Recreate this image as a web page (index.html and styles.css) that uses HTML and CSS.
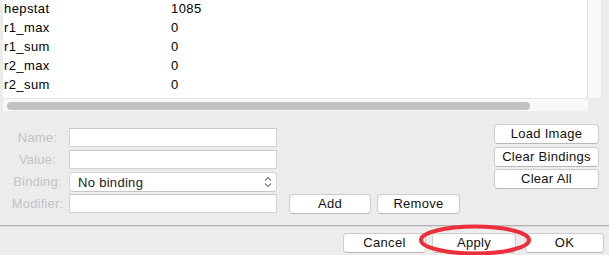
FILE: index.html
```html
<!DOCTYPE html>
<html>
<head>
<meta charset="utf-8">
<link rel="stylesheet" href="styles.css">
</head>
<body>
<div class="window">
  <div class="scrollview">
    <div class="table">
      <div class="row"><span class="c1">hepstat</span><span class="c2">1085</span></div>
      <div class="row"><span class="c1">r1_max</span><span class="c2">0</span></div>
      <div class="row"><span class="c1">r1_sum</span><span class="c2">0</span></div>
      <div class="row"><span class="c1">r2_max</span><span class="c2">0</span></div>
      <div class="row"><span class="c1">r2_sum</span><span class="c2">0</span></div>
    </div>
    <div class="vtrack"></div>
    <div class="htrack"><div class="thumb"></div></div>
  </div>

  <div class="form">
    <div class="fields">
      <label class="lbl">Name:</label><div class="input"></div><div></div>
      <label class="lbl">Value:</label><div class="input"></div><div></div>
      <label class="lbl">Binding:</label>
      <div class="popup"><span>No binding</span>
        <svg class="chev" width="8" height="12" viewBox="0 0 8 12"><path d="M1 4.5 L4 1.5 L7 4.5 M1 7.5 L4 10.5 L7 7.5" fill="none" stroke="#7a7a7a" stroke-width="1.1"/></svg>
      </div><div></div>
      <label class="lbl">Modifier:</label><div class="input"></div>
      <div class="pair"><button class="btn w-add">Add</button><button class="btn w-remove">Remove</button></div>
    </div>
    <div class="side">
      <button class="btn w-side">Load Image</button>
      <button class="btn w-side">Clear Bindings</button>
      <button class="btn w-side">Clear All</button>
    </div>
  </div>

  <div class="footer">
    <button class="btn w-cancel">Cancel</button>
    <button class="btn w-apply">Apply</button>
    <button class="btn w-ok">OK</button>
  </div>

  <svg class="mark" width="120" height="36" viewBox="0 0 120 36"><ellipse cx="59" cy="16" rx="54" ry="13.5" fill="none" stroke="#ec2f3a" stroke-width="4"/></svg>
</div>
</body>
</html>
```

FILE: styles.css
```css
* { box-sizing: border-box; }
html, body { margin: 0; padding: 0; }
body {
  background: #ececec;
  font-family: "Liberation Sans", Arial, sans-serif;
  font-size: 13px;
  color: #000;
}
.window {
  position: relative;
  width: 609px;
  height: 255px;
  display: flex;
  flex-direction: column;
  overflow: hidden;
}
.scrollview {
  display: grid;
  grid-template-columns: 585px 13px;
  grid-template-rows: 98px 13px;
  margin-left: 3px;
}
.table {
  background: #fff;
  overflow: hidden;
  border-right: 1px solid #e2e2e2;
}
.row {
  display: flex;
  height: 19px;
  line-height: 19px;
  padding-left: 1px;
}
.row:first-child { margin-top: -1px; }
.c1 { width: 167px; letter-spacing: 0.4px; }
.c2 { letter-spacing: 0.4px; }
.vtrack { background: #f8f8f8; }
.htrack {
  background: #f9f9f9;
  border-top: 1px solid #e4e4e4;
  padding: 3px 0 0 4px;
}
.thumb {
  width: 523px;
  height: 8px;
  border-radius: 4px;
  background: #c2c2c2;
}
.form {
  flex: 1;
  display: flex;
  align-items: flex-start;
}
.fields {
  display: grid;
  grid-template-columns: 63px 208px auto;
  grid-auto-rows: 19px;
  row-gap: 3px;
  margin: 17px 0 0 6px;
  align-items: center;
}
.lbl {
  text-align: center;
  color: #c4c4c4;
  letter-spacing: 0.2px;
  line-height: 19px;
}
.input {
  height: 19px;
  background: #fff;
  border: 1px solid #d3d3d3;
  border-top-color: #c8c8c8;
}
.popup {
  height: 20px;
  margin-top: 1px;
  background: #fff;
  border: 1px solid #d6d6d6;
  border-bottom-color: #c6c6c6;
  border-radius: 4px;
  display: flex;
  align-items: center;
  justify-content: space-between;
  padding: 0 4px 0 8px;
  color: #222;
  letter-spacing: 0.3px;
}
.chev { display: block; }
.pair {
  display: flex;
  gap: 6px;
  margin-left: 12px;
  align-self: start;
}
.btn {
  font-family: inherit;
  font-size: 13px;
  letter-spacing: 0.3px;
  color: #111;
  background: #fff;
  border: 1px solid #cdcdcd;
  border-bottom-color: #b8b8b8;
  border-radius: 4px;
  height: 20px;
  padding: 0;
  line-height: 18px;
  text-align: center;
}
.w-add { width: 82px; }
.w-remove { width: 83px; }
.side {
  margin: 13px 10px 0 auto;
  display: flex;
  flex-direction: column;
  gap: 2.5px;
}
.w-side { width: 105px; }
.footer {
  height: 30px;
  border-top: 1px solid #b3b3b3;
  box-shadow: inset 0 1px 0 #dadada;
  display: flex;
  justify-content: flex-end;
  align-items: flex-start;
  padding: 7px 5px 0 0;
}
.w-cancel { width: 83px; }
.w-apply { width: 84px; margin-left: 6px; }
.w-ok { width: 79px; margin-left: 9px; }
.mark {
  position: absolute;
  left: 416px;
  top: 224px;
}
```
